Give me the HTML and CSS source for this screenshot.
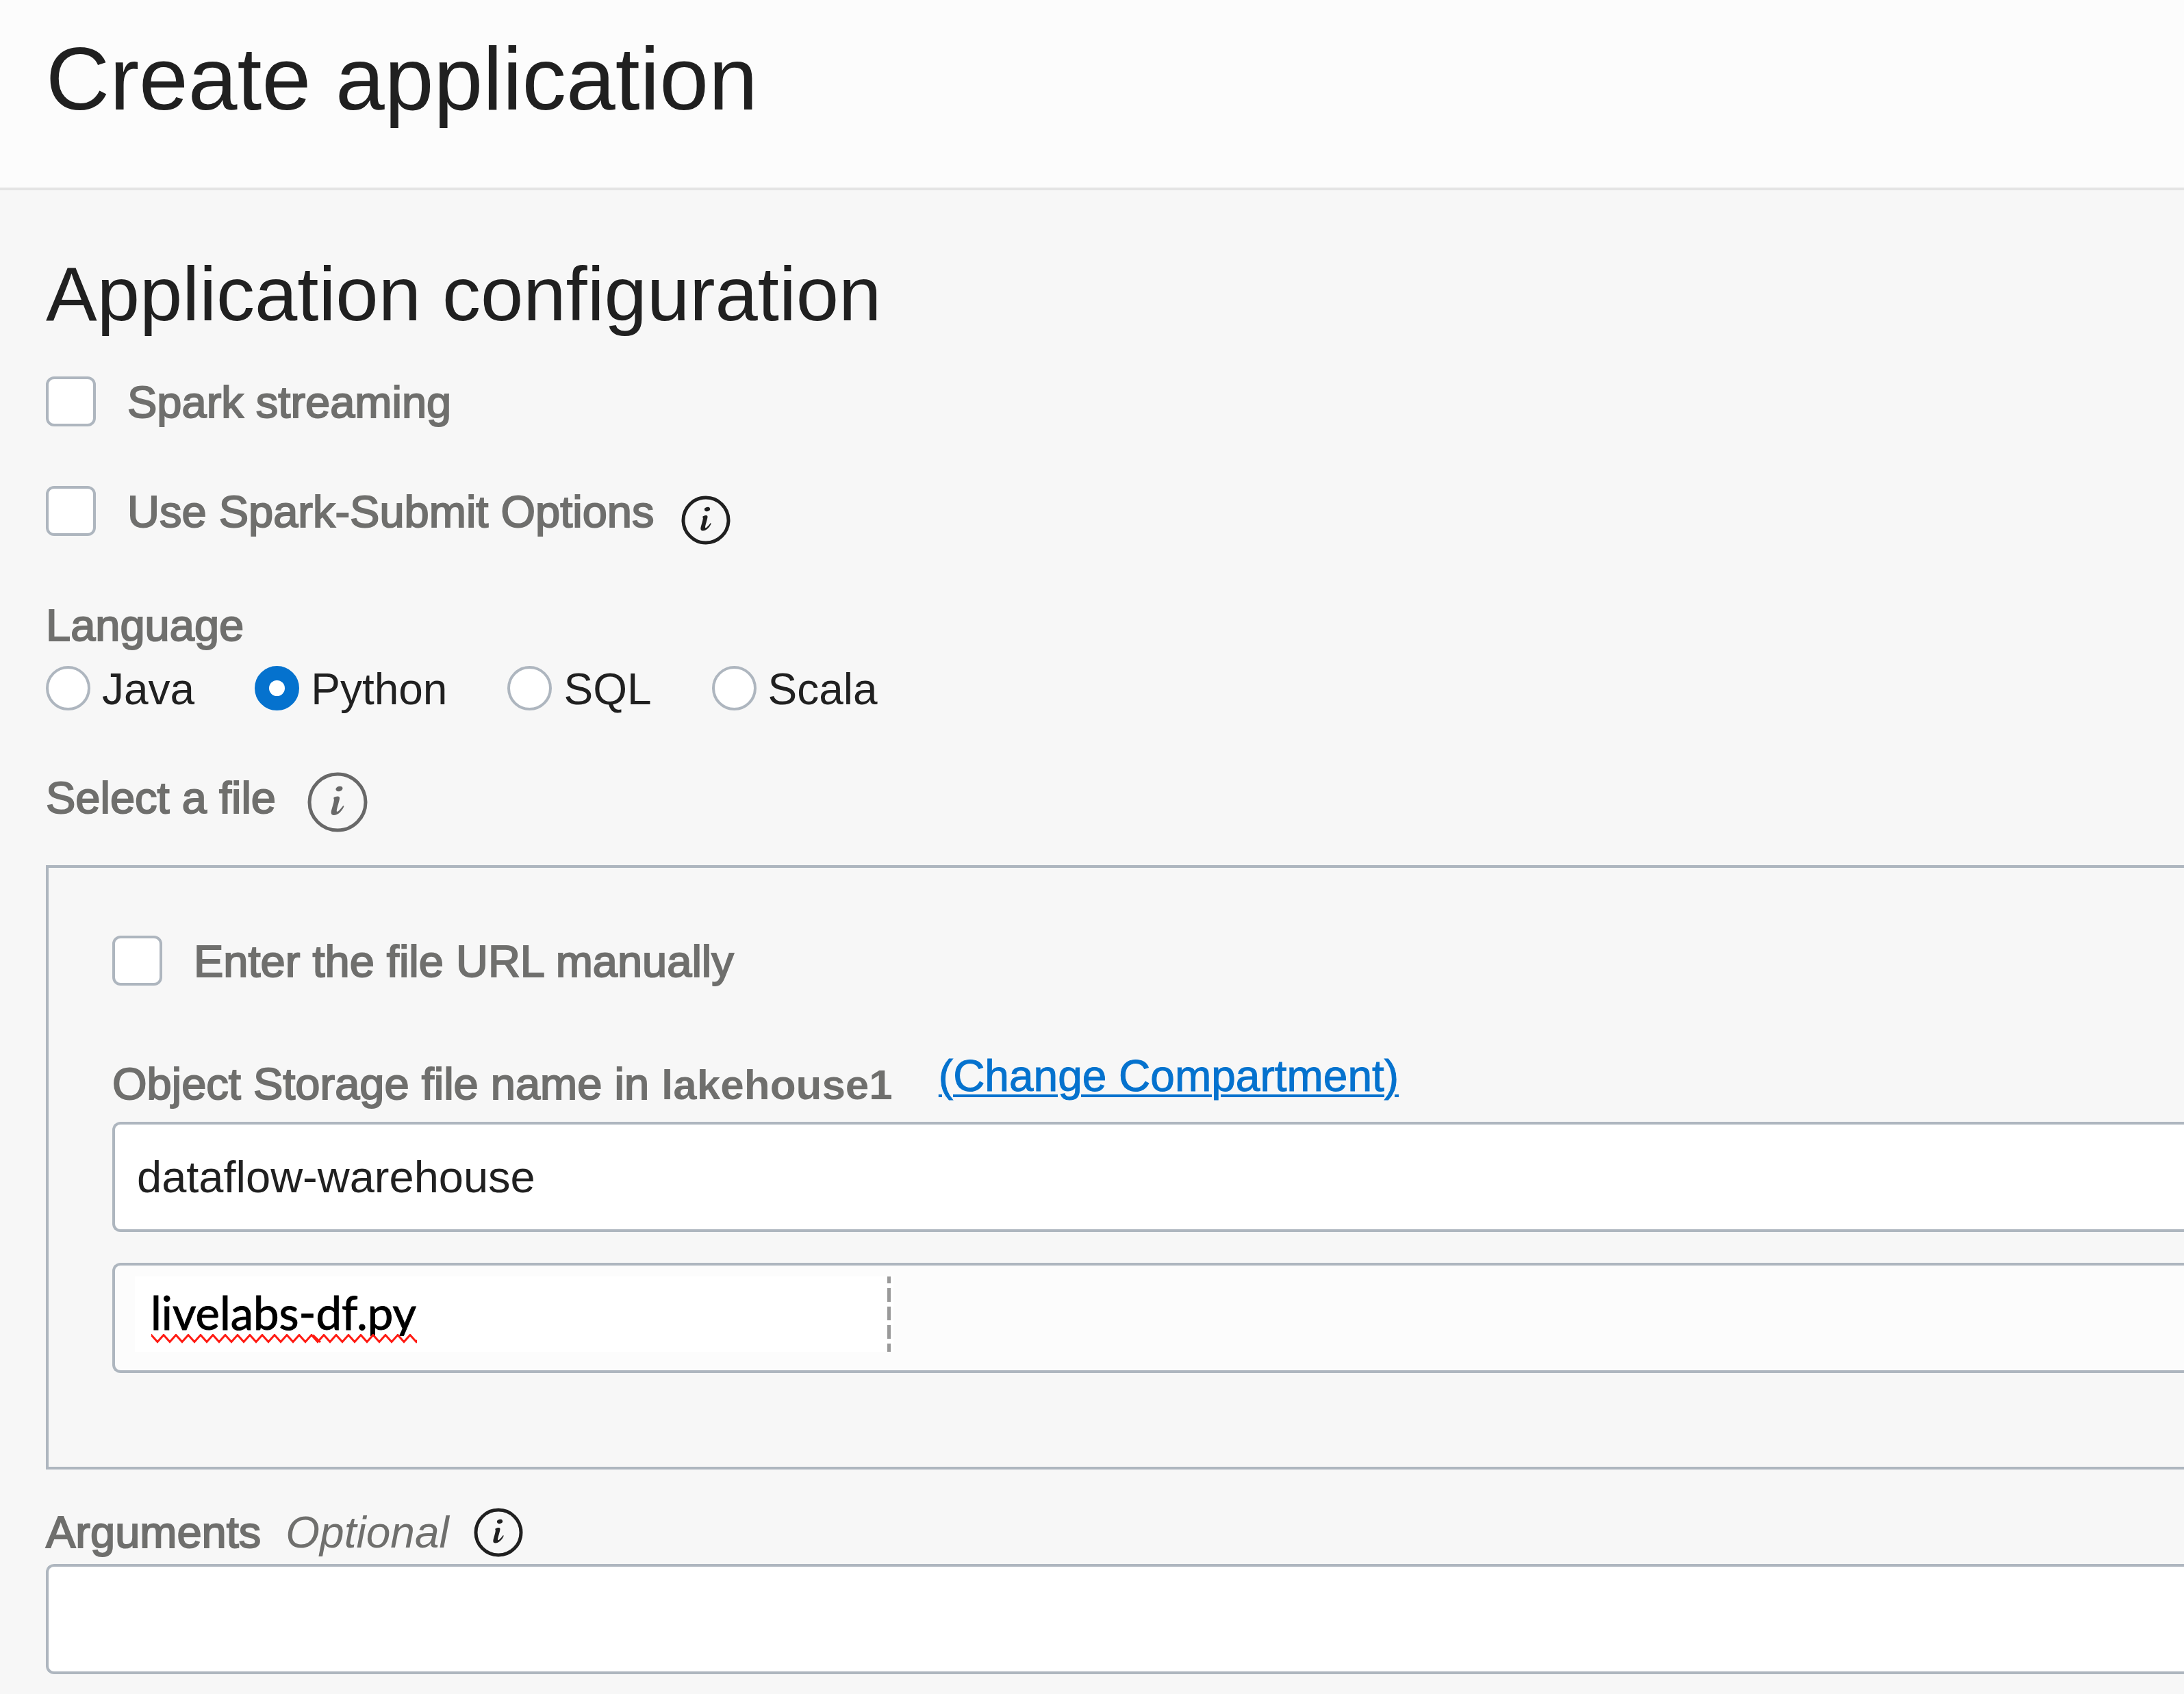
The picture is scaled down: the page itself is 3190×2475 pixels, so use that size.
FILE: index.html
```html
<!DOCTYPE html>
<html lang="en">
<head>
<meta charset="utf-8">
<title>Create application</title>
<link rel="stylesheet" href="styles.css">
</head>
<body>
<svg width="0" height="0" class="sprite" aria-hidden="true">
  <symbol id="info-i" viewBox="0 0 72 72">
    <ellipse cx="38" cy="20" rx="4.2" ry="3" transform="rotate(-15 38 20)"/>
    <path d="M31.5 30.5 C34 29 38.500 28 38.500 31 C38.500 34 35.500 42 35 46 C34.800 47.800 36 47.500 37.500 46.200 C39.500 44.500 41 42.500 42.500 40.500 C43.200 40 44 40.600 43.500 41.500 C41 47 36.500 51.500 31.500 51.500 C28 51.500 28 48.500 28.800 45.500 C29.800 41.500 31.500 37 31.800 33.500 C31.900 32 31 31.800 31.500 30.500Z"/>
  </symbol>
</svg>

<header class="page-header">
  <h1>Create application</h1>
</header>

<main class="page-main">
  <h2>Application configuration</h2>

  <div class="check-row check-row-first">
    <input type="checkbox" id="streaming">
    <label for="streaming">Spark streaming</label>
  </div>

  <div class="check-row check-row-second">
    <input type="checkbox" id="spark-submit">
    <label for="spark-submit">Use Spark-Submit Options</label>
    <button type="button" class="info info-after-check" aria-label="About Spark-Submit options">
      <svg viewBox="0 0 72 72"><circle cx="36" cy="36" r="33"/><use href="#info-i"/></svg>
    </button>
  </div>

  <fieldset class="language">
    <legend>Language</legend>
    <div class="radio-row">
      <label><input type="radio" name="language">Java</label>
      <label><input type="radio" name="language" checked>Python</label>
      <label><input type="radio" name="language">SQL</label>
      <label><input type="radio" name="language">Scala</label>
    </div>
  </fieldset>

  <div class="select-file">
    <span class="field-label" id="file-heading">Select a file</span>
    <button type="button" class="info info-large" aria-label="About selecting a file">
      <svg viewBox="0 0 88 88"><circle cx="44" cy="44" r="41"/><use href="#info-i" x="0" y="0" width="88" height="88"/></svg>
    </button>
  </div>

  <section class="file-box" aria-labelledby="file-heading">
    <div class="check-row">
      <input type="checkbox" id="manual-url">
      <label for="manual-url">Enter the file URL manually</label>
    </div>

    <div class="storage-row">
      <label for="bucket" class="storage-label">Object Storage file name in <strong>lakehouse1</strong></label>
      <a href="#compartment">(Change Compartment)</a>
    </div>

    <select id="bucket" class="field">
      <option>dataflow-warehouse</option>
    </select>

    <div class="field file-field">
      <div class="file-entry">
        <input type="text" value="livelabs-df.py" aria-label="File name" spellcheck="false">
        <svg class="squiggle" viewBox="0 0 388 26" aria-hidden="true">
          <defs>
            <pattern id="wave" width="18" height="14" patternUnits="userSpaceOnUse">
              <path d="M-9 11.500 L0 1.500 L9 11.500 L18 1.500 L27 11.500"/>
            </pattern>
          </defs>
          <path class="cover" d="M0 3H388V26H0Z"/>
          <rect class="wave" width="388" height="14" fill="url(#wave)"/>
          <path d="M236 1.500 L247 12"/>
        </svg>
      </div>
    </div>
  </section>

  <div class="arguments-row">
    <label for="arguments" class="field-label">Arguments</label>
    <em>Optional</em>
    <button type="button" class="info" aria-label="About arguments">
      <svg viewBox="0 0 72 72"><circle cx="36" cy="36" r="33"/><use href="#info-i"/></svg>
    </button>
  </div>
  <input type="text" id="arguments" class="field">
</main>
</body>
</html>
```
FILE: styles.css
```css
:root {
  --text: #202020;
  --muted: #6f6f6d;
  --line: #aeb6bf;
  --blue: #0572ce;
}

* {
  box-sizing: border-box;
}

body {
  margin: 0;
  min-height: 100vh;
  background: #f7f7f7;
  color: var(--text);
  font-family: "Liberation Sans", Arial, sans-serif;
  font-size: 65px;
}

.sprite {
  position: absolute;
}

h1,
h2 {
  margin: 0;
  font-weight: 400;
}

.page-header {
  padding: 40px 67px 84px;
  border-bottom: 4px solid #e4e4e4;
  background: #fcfcfc;
}

h1 {
  font-size: 129px;
  line-height: 150px;
}

.page-main {
  padding: 88px 0 31px 67px;
}

h2 {
  font-size: 112px;
  line-height: 128px;
}

/* Labels sit between regular and bold weight */
.check-row label,
.field-label,
legend,
.storage-label {
  color: var(--muted);
  -webkit-text-stroke: 2px var(--muted);
}

/* Check boxes */
.check-row {
  display: flex;
  align-items: flex-start;
}

.check-row-first {
  margin-top: 56px;
}

.check-row-second {
  margin-top: 84px;
}

.check-row label {
  margin-left: 46px;
  line-height: 76px;
}

input[type="checkbox"] {
  appearance: none;
  width: 73px;
  height: 73px;
  margin: 0;
  border: 4px solid var(--line);
  border-radius: 12px;
  background: #fff;
}

/* Info buttons */
.info {
  width: 72px;
  height: 72px;
  padding: 0;
  border: 0;
  background: none;
  color: #202020;
}

.info svg {
  display: block;
  width: 100%;
  height: 100%;
  fill: currentColor;
}

.info circle {
  fill: none;
  stroke: currentColor;
  stroke-width: 5;
}

.info-after-check {
  margin: 14px 0 0 40px;
}

.info-large {
  width: 88px;
  height: 88px;
  color: #686868;
}

/* Language */
.language {
  margin: 78px 0 0;
  padding: 0;
  border: 0;
}

legend {
  padding: 0;
  line-height: 80px;
}

.radio-row {
  display: flex;
  gap: 88px;
  margin-top: 19px;
  font-size: 64px;
  line-height: 68px;
}

.radio-row label {
  display: flex;
  gap: 17px;
}

input[type="radio"] {
  appearance: none;
  width: 65px;
  height: 65px;
  margin: 0;
  border: 4px solid var(--line);
  border-radius: 50%;
  background: #fff;
}

input[type="radio"]:checked {
  border: 21px solid var(--blue);
}

/* File selection */
.select-file {
  display: flex;
  align-items: flex-start;
  gap: 46px;
  margin-top: 87px;
  line-height: 76px;
}

.file-box {
  margin-top: 48px;
  padding: 99px 0 137px 93px;
  border: 4px solid var(--line);
  border-right: 0;
}

.storage-row {
  display: flex;
  align-items: flex-start;
  gap: 67px;
  margin: 105px 0 18px;
}

.storage-label {
  line-height: 72px;
}

.storage-label strong {
  font-size: 62px;
  -webkit-text-stroke: 0;
}

.storage-row a {
  color: var(--blue);
  font-size: 64px;
  line-height: 48px;
  -webkit-text-stroke: 1px var(--blue);
  text-decoration-thickness: 4px;
  text-underline-offset: 5px;
}

.field {
  appearance: none;
  display: block;
  width: 100%;
  height: 161px;
  padding: 0 32px;
  border: 4px solid var(--line);
  border-right: 0;
  border-radius: 12px 0 0 12px;
  background: #fff;
  color: var(--text);
  font: inherit;
}

.file-field {
  margin-top: 45px;
  padding: 16px 29px;
  background: #fcfcfc;
}

.file-entry {
  position: relative;
  max-width: 1108px;
}

.file-entry input {
  display: block;
  width: 100%;
  height: 110px;
  padding: 0 0 6px 23px;
  border: 0;
  background: repeating-linear-gradient(#999 0 10px, #fff 10px 17px, #999 17px 27px) calc(100% - 4px) 0 / 5px 100% no-repeat #fff;
  color: #000;
  font-family: Lato, "Open Sans", sans-serif;
  font-size: 67px;
  -webkit-text-stroke: 1px #000;
}

.squiggle {
  position: absolute;
  left: 24px;
  top: 84px;
  width: 388px;
  height: 26px;
  fill: none;
  stroke: #ff1a12;
  stroke-width: 3;
}

.squiggle .cover {
  fill: #fff;
  stroke: none;
}

.squiggle .wave {
  stroke: none;
}

/* Arguments */
.arguments-row {
  display: flex;
  gap: 36px;
  margin: 56px 0 10px;
  line-height: 72px;
}

.arguments-row em {
  color: var(--muted);
  font-size: 64px;
}
```
